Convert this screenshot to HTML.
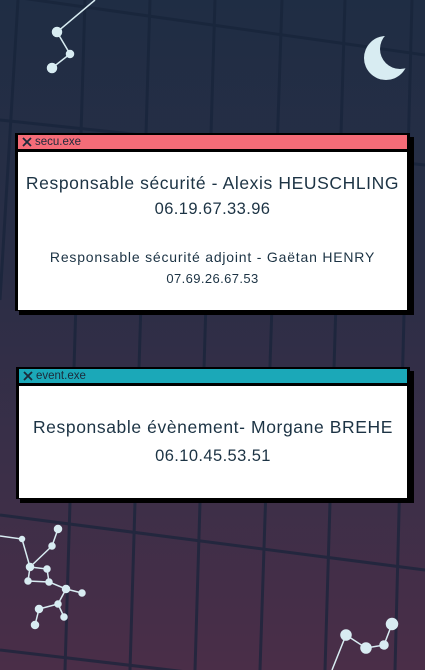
<!DOCTYPE html>
<html><head><meta charset="utf-8"><style>
html,body{margin:0;padding:0}
body{width:425px;height:670px;overflow:hidden;position:relative;background:linear-gradient(#1f2d44 0%,#2a2e46 40%,#3b2f48 70%,#4a2e48 100%);font-family:"Liberation Sans",sans-serif}
.win{position:absolute;background:#000;box-shadow:4px 4px 0 #000}
.bar{position:absolute;left:3px;right:3px;top:2px;height:14px;font-size:11.5px;color:#1c2a3a;line-height:14px;padding-left:17px}
.bar svg{position:absolute;left:4px;top:2px}
.body{position:absolute;left:3px;right:3px;bottom:1px;background:#fff;color:#1c3344;text-align:center}
p{margin:0;white-space:nowrap}
</style></head><body>
<svg width="425" height="670" style="position:absolute;left:0;top:0">
<defs><mask id="m"><rect width="425" height="670" fill="#000"/><circle cx="386" cy="58" r="22" fill="#fff"/><circle cx="400" cy="49" r="20" fill="#000"/></mask></defs>
<g stroke="#17243a" stroke-width="3" fill="none" opacity=".7">
<path d="M0 -5 L425 55"/><path d="M0 120 L425 165"/><path d="M0 515 L425 570"/><path d="M0 650 L425 700"/>
<path d="M18 0 L0 300"/><path d="M150 0 L130 670"/><path d="M282 0 L260 670"/><path d="M412 0 L395 670"/>
<path d="M85 0 L65 670"/><path d="M215 0 L195 670"/><path d="M345 0 L325 670"/>
</g>
<g stroke="#d8ecf2" stroke-width="1.5" fill="#d8ecf2">
<path d="M95 0 L57 32 L70 54 L52 68" fill="none"/>
<circle cx="57" cy="32" r="4.5"/><circle cx="70" cy="54" r="3.5"/><circle cx="52" cy="68" r="4.5"/>
<path d="M0 536 L22 539 L30 567 L52 546 L58 529 M30 567 L47 569 L49 582 L66 589 L82 593 M28 581 L49 582 M66 589 L58 604 L39 609 L35 625 M58 604 L64 617 M30 567 L28 581" fill="none"/>
<circle cx="22" cy="539" r="2.5"/><circle cx="58" cy="529" r="3.5"/><circle cx="52" cy="546" r="3"/><circle cx="30" cy="567" r="3.5"/><circle cx="47" cy="569" r="3"/><circle cx="28" cy="581" r="3"/><circle cx="49" cy="582" r="3"/><circle cx="66" cy="589" r="3.5"/><circle cx="82" cy="593" r="3"/><circle cx="58" cy="604" r="3"/><circle cx="39" cy="609" r="3.5"/><circle cx="35" cy="625" r="3.5"/><circle cx="64" cy="617" r="3"/>
<path d="M332 670 L346 635 L366 648 L384 645 L392 624" fill="none"/>
<circle cx="346" cy="635" r="5"/><circle cx="366" cy="648" r="5"/><circle cx="384" cy="645" r="4"/><circle cx="392" cy="624" r="5.5"/>
</g>
<rect width="425" height="670" fill="#d8ecf2" mask="url(#m)"/>
</svg>
<div class="win" style="left:15px;top:133px;width:395px;height:178px">
<div class="bar" style="background:#f56c78"><svg width="10" height="10"><path d="M1 1L9 9M9 1L1 9" stroke="#1c2a3a" stroke-width="1.8"/></svg>secu.exe</div>
<div class="body" style="top:19px">
<p style="font-size:17.5px;margin-top:21px;letter-spacing:.6px">Responsable sécurité - Alexis HEUSCHLING</p>
<p style="font-size:16.5px;margin-top:6px;letter-spacing:.4px">06.19.67.33.96</p>
<p style="font-size:14px;margin-top:30px;letter-spacing:.8px">Responsable sécurité adjoint - Gaëtan HENRY</p>
<p style="font-size:13px;margin-top:6px;letter-spacing:.4px">07.69.26.67.53</p>
</div></div>
<div class="win" style="left:16px;top:367px;width:394px;height:132px">
<div class="bar" style="background:#1ba8b8"><svg width="10" height="10"><path d="M1 1L9 9M9 1L1 9" stroke="#1c2a3a" stroke-width="1.8"/></svg>event.exe</div>
<div class="body" style="top:19px">
<p style="font-size:17.5px;margin-top:31px;letter-spacing:.6px">Responsable évènement- Morgane BREHE</p>
<p style="font-size:16.5px;margin-top:9px;letter-spacing:.4px">06.10.45.53.51</p>
</div></div>
</body></html>
